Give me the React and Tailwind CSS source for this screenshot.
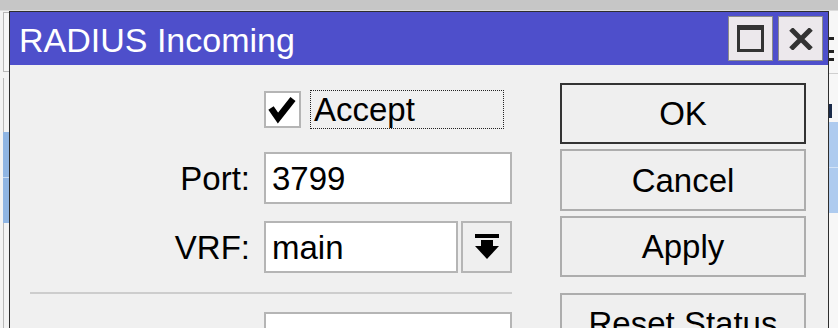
export default function App() {
  const font = { fontFamily: '"Liberation Sans", Arial, sans-serif' };

  return (
    <div
      className="w-[838px] h-[328px] overflow-hidden flex flex-col bg-[#f0f0f0] text-black"
      style={font}
    >
      {/* desktop strip above the window */}
      <div className="h-[11px] shrink-0 bg-[#c6c6c6] border-b border-[#dcdcdc]" />

      <div className="flex flex-1 min-h-0">
        {/* left edge of background window */}
        <div className="w-[9px] shrink-0 bg-[#f3f3f3] flex flex-col pt-[1px]">
          <div className="ml-[3px] h-[60px] border border-r-0 border-[#b8b8b8] bg-[#f7f7f7]" />
          <div className="ml-[3px] mt-[6px] h-[54px] border-l border-[#b8b8b8]" />
          <div className="ml-[3px] h-[46px] bg-[#8fb5e3] border-b border-[#c9dcf2]" />
          <div className="ml-[3px] h-[45px] bg-[#8fb5e3]" />
          <div className="ml-[3px] flex-1 border-l border-[#b8b8b8]" />
        </div>

        {/* window */}
        <div className="w-[820px] shrink-0 border border-b-0 border-[#2e2e2e] flex flex-col bg-[#f0f0f0]">
          {/* title bar */}
          <div className="h-[53px] shrink-0 bg-[#4e4fcb] flex items-center justify-between pl-[9px] pr-[5px]">
            <span className="text-white text-[34px] leading-none mt-[2px]">RADIUS Incoming</span>
            <div className="flex gap-[5px]">
              <button className="w-[45px] h-[45px] bg-[#ece8ec] border border-[#8c8c8c] flex items-center justify-center">
                <div className="w-[27px] h-[27px] border-[3px] border-t-[5px] border-[#333]" />
              </button>
              <button className="w-[45px] h-[45px] bg-[#ece8ec] border border-[#8c8c8c] flex items-center justify-center">
                <svg width="24" height="22" viewBox="0 0 24 22">
                  <path d="M2 1 L22 21 M22 1 L2 21" stroke="#333" strokeWidth="5" />
                </svg>
              </button>
            </div>
          </div>

          {/* body */}
          <div className="flex flex-1">
            {/* form */}
            <div className="w-[502px] pl-[20px] pt-[25px] flex flex-col">
              <div className="grid grid-cols-[220px_248px] gap-x-[14px] items-center">
                <div />
                <div className="flex items-center h-[39px]">
                  <div className="w-[37px] h-[37px] bg-white border-2 border-[#b5b5b5] flex items-center justify-center">
                    <svg width="33" height="33" viewBox="0 0 33 33" className="shrink-0">
                      <path d="M5 15 L12 25 L27 6" stroke="#000" strokeWidth="6.5" fill="none" strokeLinejoin="miter" />
                    </svg>
                  </div>
                  <div className="ml-[9px] w-[194px] h-[39px] border border-dotted border-[#222] flex items-center pl-[3px] text-[33px] leading-none">
                    Accept
                  </div>
                </div>

                <div className="text-right text-[33px] leading-none mt-[23px]">Port:</div>
                <div className="mt-[23px] h-[52px] bg-white border-2 border-[#b5b5b5] flex items-center pl-[6px] text-[33px] leading-none">
                  3799
                </div>

                <div className="text-right text-[33px] leading-none mt-[17px]">VRF:</div>
                <div className="mt-[17px] h-[52px] flex gap-[3px]">
                  <div className="flex-1 bg-white border-2 border-[#b5b5b5] flex items-center pl-[6px] text-[33px] leading-none">
                    main
                  </div>
                  <button className="w-[51px] bg-[#efefef] border-2 border-[#b5b5b5] flex items-center justify-center">
                    <svg width="24" height="26" viewBox="0 0 24 26">
                      <rect x="0" y="0" width="24" height="4" fill="#000" />
                      <rect x="6" y="6" width="12" height="7" fill="#000" />
                      <path d="M0 12 L24 12 L12 25 Z" fill="#000" />
                    </svg>
                  </button>
                </div>
              </div>

              <div className="mt-[19px] border-t-2 border-[#cdcdcd]" />

              <div className="grid grid-cols-[220px_248px] gap-x-[14px] mt-[18px]">
                <div />
                <div className="h-[52px] bg-white border-2 border-[#b5b5b5]" />
              </div>
            </div>

            {/* buttons */}
            <div className="ml-[48px] w-[246px] pt-[18px] flex flex-col">
              <button className="h-[61px] bg-[#efefef] border-2 border-[#333] text-[33px] leading-none">OK</button>
              <button className="mt-[5px] h-[62px] bg-[#efefef] border-2 border-[#adadad] text-[33px] leading-none">Cancel</button>
              <button className="mt-[5px] h-[61px] bg-[#efefef] border-2 border-[#adadad] text-[33px] leading-none">Apply</button>
              <button className="mt-[16px] h-[61px] bg-[#efefef] border-2 border-[#adadad] text-[33px] leading-none">Reset Status</button>
            </div>
          </div>
        </div>

        {/* right edge of background window */}
        <div className="flex-1 bg-[#f7f7f7] flex flex-col">
          <div className="mt-[26px] h-[3px] w-[5px] bg-[#222]" />
          <div className="mt-[10px] h-[3px] w-[5px] bg-[#222]" />
          <div className="mt-[5px] h-[3px] w-[5px] bg-[#222]" />
          <div className="mt-[12px] border-t border-[#cfcfcf]" />
          <div className="mt-[30px] h-[14px] w-[3px] bg-[#1a2b4a]" />
          <div className="mt-[4px] h-[46px] bg-[#aecbef] border-b border-[#d4e3f6]" />
          <div className="h-[45px] bg-[#aecbef]" />
        </div>
      </div>
    </div>
  );
}
